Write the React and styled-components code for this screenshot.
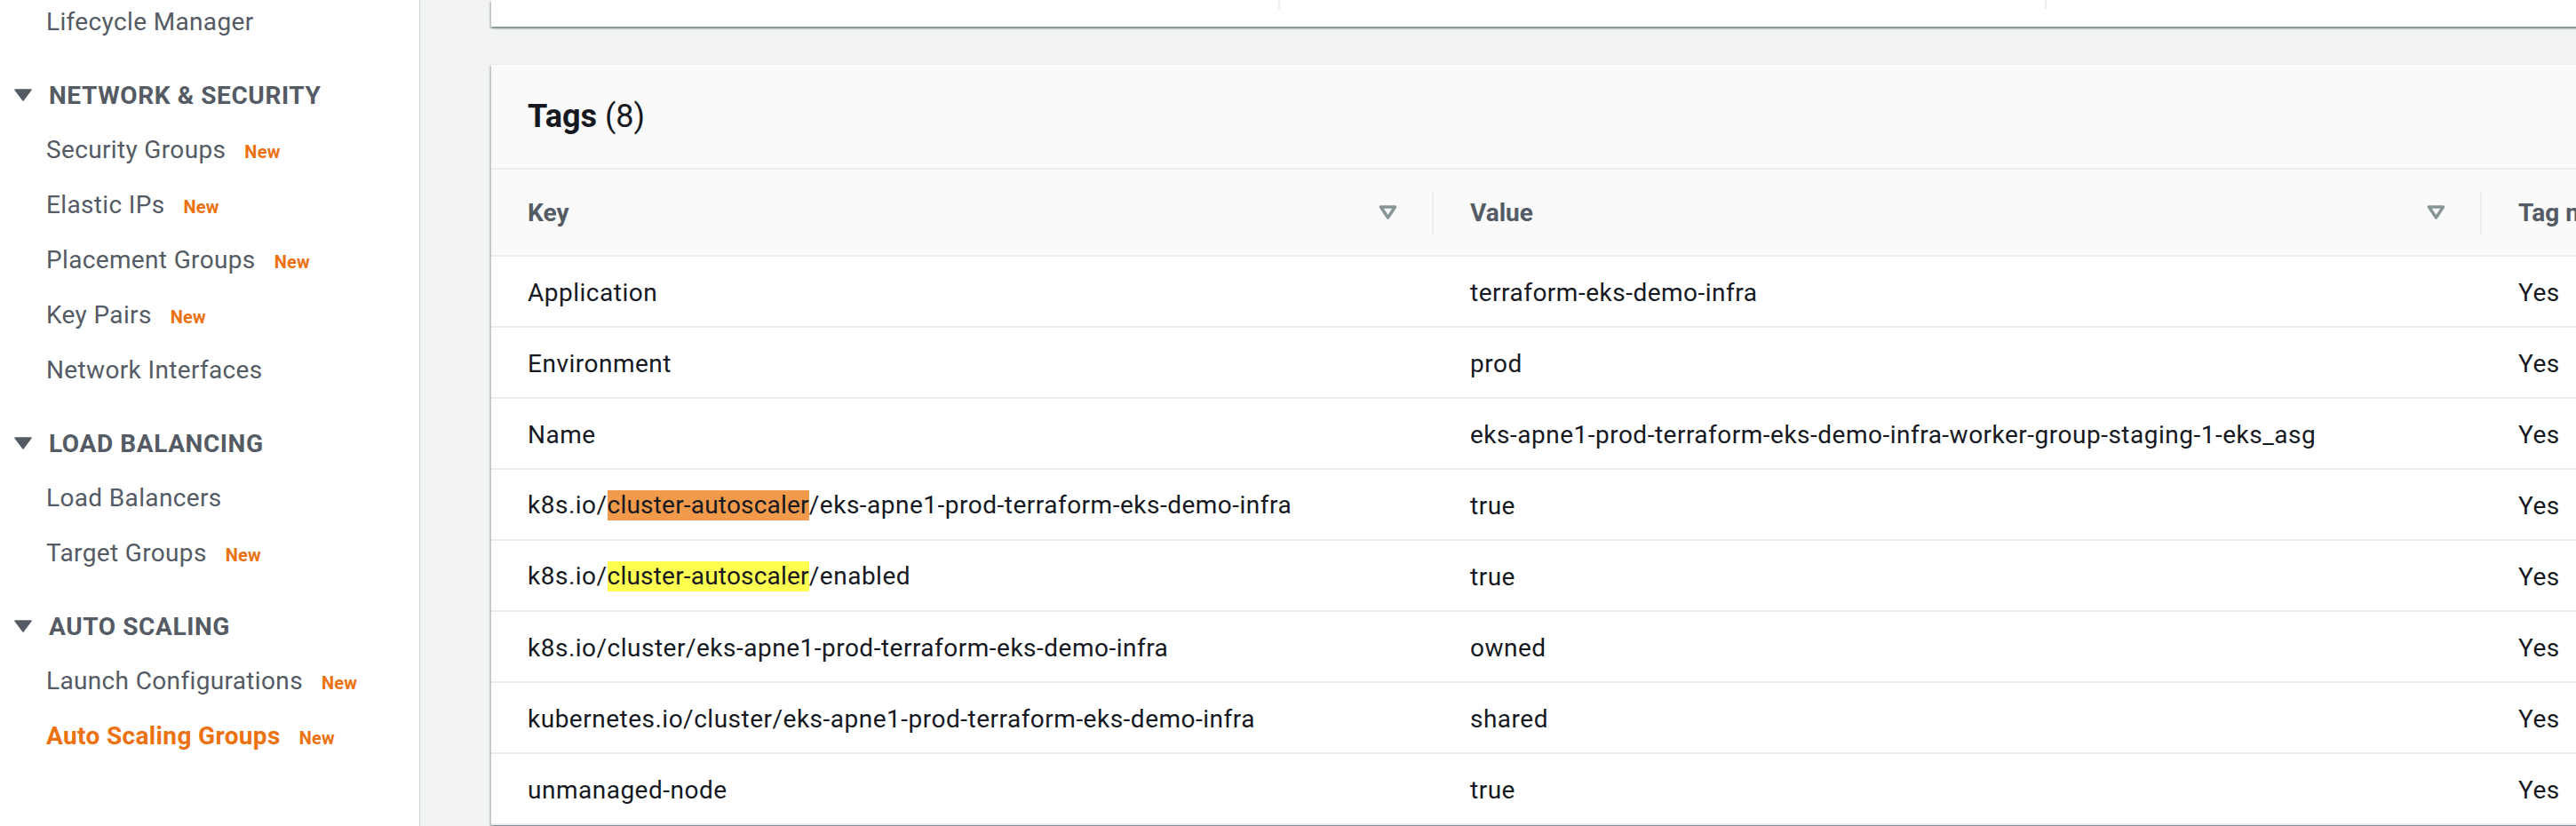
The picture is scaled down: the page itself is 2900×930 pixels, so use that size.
import React from "react";
import styled, { createGlobalStyle } from "styled-components";

const GlobalStyle = createGlobalStyle`
  *, *::before, *::after {
    box-sizing: border-box;
  }
  html, body {
    margin: 0;
    padding: 0;
  }
  body {
    font-family: Roboto, "Liberation Sans", Arial, sans-serif;
    color: #16191f;
    background: #f2f3f3;
  }
`;

const Page = styled.div`
  display: flex;
  width: 2900px;
  height: 930px;
  overflow: hidden;
`;

/* ---------- side navigation ---------- */

const Sidebar = styled.nav`
  flex: none;
  width: 473px;
  height: 100%;
  background: #fff;
  border-right: 1px solid #cfd5d6;
  overflow: hidden;
`;

const NavList = styled.div`
  display: flex;
  flex-direction: column;
  gap: 20px;
  margin-top: -6px;
`;

const Section = styled.div`
  display: flex;
  flex-direction: column;
`;

const SectionHeading = styled.div`
  display: flex;
  align-items: center;
  gap: 19px;
  height: 62px;
  padding-left: 16px;
  font-size: 28px;
  font-weight: 700;
  letter-spacing: 0.6px;
  color: #545b64;
  text-transform: uppercase;
  white-space: nowrap;
`;

const NavItem = styled.div`
  height: 62px;
  line-height: 62px;
  padding-left: 52px;
  font-size: 28px;
  letter-spacing: 0.35px;
  font-weight: ${(p) => (p.$active ? 700 : 400)};
  color: ${(p) => (p.$active ? "#ec7211" : "#545b64")};
  white-space: nowrap;
`;

const NewBadge = styled.span`
  margin-left: 21px;
  font-size: 20px;
  font-weight: 700;
  letter-spacing: 0.2px;
  color: #ec7211;
`;

const Caret = () => (
  <svg width="20" height="14" viewBox="0 0 20 14">
    <polygon
      points="1,1 19,1 10,13"
      fill="#545b64"
      stroke="#545b64"
      strokeWidth="1.5"
      strokeLinejoin="round"
    />
  </svg>
);

/* ---------- content ---------- */

const Main = styled.main`
  flex: 1;
  min-width: 0;
  padding-left: 80px;
  overflow: hidden;
`;

const SummaryCard = styled.div`
  display: grid;
  grid-template-columns: 886px 863px 1fr;
  width: 2600px;
  height: 30px;
  background: #fff;
  box-shadow: 0 2px 2px 0 rgba(0, 28, 36, 0.3),
    2px 2px 2px 0 rgba(0, 28, 36, 0.15), -2px 2px 2px 0 rgba(0, 28, 36, 0.15);
`;

const SummaryColumn = styled.div`
  height: 10px;
  border-left: ${(p) => (p.$first ? "none" : "2px solid #eaeded")};
`;

const TagsCard = styled.section`
  width: 2600px;
  margin-top: 42px;
  background: #fff;
  border-top: 1px solid #eaeded;
  box-shadow: 0 2px 2px 0 rgba(0, 28, 36, 0.3),
    2px 2px 2px 0 rgba(0, 28, 36, 0.15), -2px 2px 2px 0 rgba(0, 28, 36, 0.15);
`;

const CardHeader = styled.div`
  display: flex;
  align-items: center;
  height: 118px;
  padding-left: 41px;
  background: #fafafa;
  border-bottom: 2px solid #eaeded;
`;

const Title = styled.h2`
  margin: 0;
  font-size: 36px;
  font-weight: 700;
  color: #16191f;
`;

const Counter = styled.span`
  font-weight: 400;
  color: #16191f;
`;

const Row = styled.div`
  display: grid;
  grid-template-columns: 1061px 1180px 1fr;
  align-items: center;
  height: ${(p) => (p.$head ? "98px" : "80px")};
  background: ${(p) => (p.$head ? "#fafafa" : "#fff")};
  border-bottom: 2px solid #eaeded;
`;

const HeadCell = styled.div`
  padding-left: 41px;
  font-size: 28px;
  font-weight: 700;
  color: #545b64;
  white-space: nowrap;
`;

const HeadInner = styled.div`
  display: flex;
  align-items: center;
  justify-content: space-between;
  height: 47px;
  padding-right: 39px;
  border-right: ${(p) => (p.$last ? "none" : "2px solid #eaeded")};
`;

const Cell = styled.div`
  padding: 2px 41px 0;
  font-size: 28px;
  letter-spacing: 0.5px;
  color: #16191f;
  white-space: nowrap;
`;

const Match = styled.mark`
  display: inline-block;
  height: 34px;
  line-height: 34px;
  letter-spacing: 0.2px;
  color: #16191f;
  background: ${(p) => (p.$current ? "#f29a4c" : "#ffff52")};
`;

const FilterIcon = () => (
  <svg width="21" height="16" viewBox="0 0 21 16">
    <polygon
      points="2.5,2 18.5,2 10.5,14"
      fill="none"
      stroke="#879596"
      strokeWidth="3.5"
      strokeLinejoin="round"
    />
  </svg>
);

const sections = [
  { items: [{ label: "Lifecycle Manager" }] },
  {
    heading: "Network & Security",
    items: [
      { label: "Security Groups", isNew: true },
      { label: "Elastic IPs", isNew: true },
      { label: "Placement Groups", isNew: true },
      { label: "Key Pairs", isNew: true },
      { label: "Network Interfaces" },
    ],
  },
  {
    heading: "Load Balancing",
    items: [
      { label: "Load Balancers" },
      { label: "Target Groups", isNew: true },
    ],
  },
  {
    heading: "Auto Scaling",
    items: [
      { label: "Launch Configurations", isNew: true },
      { label: "Auto Scaling Groups", isNew: true, active: true },
    ],
  },
];

const hl = (current) => (
  <>
    k8s.io/<Match $current={current}>cluster-autoscaler</Match>
  </>
);

const tags = [
  { key: "Application", value: "terraform-eks-demo-infra" },
  { key: "Environment", value: "prod" },
  {
    key: "Name",
    value: "eks-apne1-prod-terraform-eks-demo-infra-worker-group-staging-1-eks_asg",
  },
  {
    key: (
      <>
        {hl(true)}/eks-apne1-prod-terraform-eks-demo-infra
      </>
    ),
    value: "true",
  },
  {
    key: (
      <>
        {hl(false)}/enabled
      </>
    ),
    value: "true",
  },
  { key: "k8s.io/cluster/eks-apne1-prod-terraform-eks-demo-infra", value: "owned" },
  {
    key: "kubernetes.io/cluster/eks-apne1-prod-terraform-eks-demo-infra",
    value: "shared",
  },
  { key: "unmanaged-node", value: "true" },
];

const App = () => {
  return (
    <Page>
      <GlobalStyle />
      <Sidebar>
        <NavList>
          {sections.map((s, i) => (
            <Section key={i}>
              {s.heading && (
                <SectionHeading>
                  <Caret />
                  {s.heading}
                </SectionHeading>
              )}
              {s.items.map((it) => (
                <NavItem key={it.label} $active={it.active}>
                  {it.label}
                  {it.isNew && <NewBadge>New</NewBadge>}
                </NavItem>
              ))}
            </Section>
          ))}
        </NavList>
      </Sidebar>

      <Main>
        <SummaryCard>
          <SummaryColumn $first />
          <SummaryColumn />
          <SummaryColumn />
        </SummaryCard>

        <TagsCard>
          <CardHeader>
            <Title>
              Tags <Counter>(8)</Counter>
            </Title>
          </CardHeader>
          <Row $head>
            <HeadCell>
              <HeadInner>
                Key
                <FilterIcon />
              </HeadInner>
            </HeadCell>
            <HeadCell>
              <HeadInner>
                Value
                <FilterIcon />
              </HeadInner>
            </HeadCell>
            <HeadCell>
              <HeadInner $last>Tag new instances</HeadInner>
            </HeadCell>
          </Row>
          {tags.map((t, i) => (
            <Row key={i}>
              <Cell>{t.key}</Cell>
              <Cell>{t.value}</Cell>
              <Cell>Yes</Cell>
            </Row>
          ))}
        </TagsCard>
      </Main>
    </Page>
  );
};

export default App;
